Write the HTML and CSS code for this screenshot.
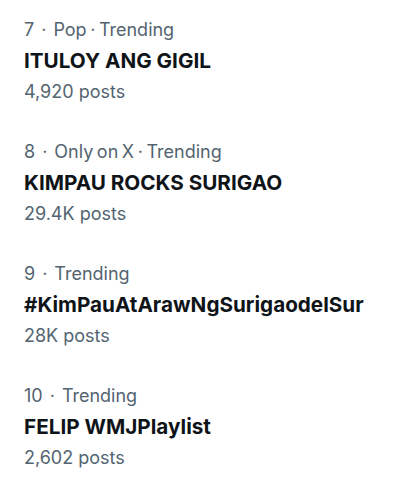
FILE: index.html
```html
<!DOCTYPE html>
<html>
<head>
<meta charset="utf-8">
<link rel="stylesheet" href="styles.css">
</head>
<body>
<div class="list">
  <div class="item">
    <div class="meta sub">7<span class="dot">·</span>Pop · Trending</div>
    <div class="title">ITULOY ANG GIGIL</div>
    <div class="meta">4,920 posts</div>
  </div>
  <div class="item">
    <div class="meta sub">8<span class="dot">·</span>Only on X · Trending</div>
    <div class="title">KIMPAU ROCKS SURIGAO</div>
    <div class="meta">29.4K posts</div>
  </div>
  <div class="item">
    <div class="meta sub">9<span class="dot">·</span>Trending</div>
    <div class="title">#KimPauAtArawNgSurigaodelSur</div>
    <div class="meta">28K posts</div>
  </div>
  <div class="item">
    <div class="meta sub">10<span class="dot">·</span>Trending</div>
    <div class="title">FELIP WMJPlaylist</div>
    <div class="meta">2,602 posts</div>
  </div>
</div>
</body>
</html>
```

FILE: styles.css
```css
html, body {
  margin: 0;
  padding: 0;
  background: #ffffff;
}
body {
  font-family: Inter, "Noto Sans", sans-serif;
  width: 400px;
  height: 499px;
  overflow: hidden;
}
.list {
  display: flex;
  flex-direction: column;
}
.item {
  padding: 14px 24px 15px;
}
.meta {
  color: #536471;
  font-size: 18px;
  line-height: 31px;
  white-space: nowrap;
}
.sub {
  word-spacing: -1.5px;
}
.dot {
  margin: 0 7px;
}
.title {
  color: #0f1419;
  font-size: 20.7px;
  font-weight: 700;
  line-height: 31px;
  white-space: nowrap;
}
```
